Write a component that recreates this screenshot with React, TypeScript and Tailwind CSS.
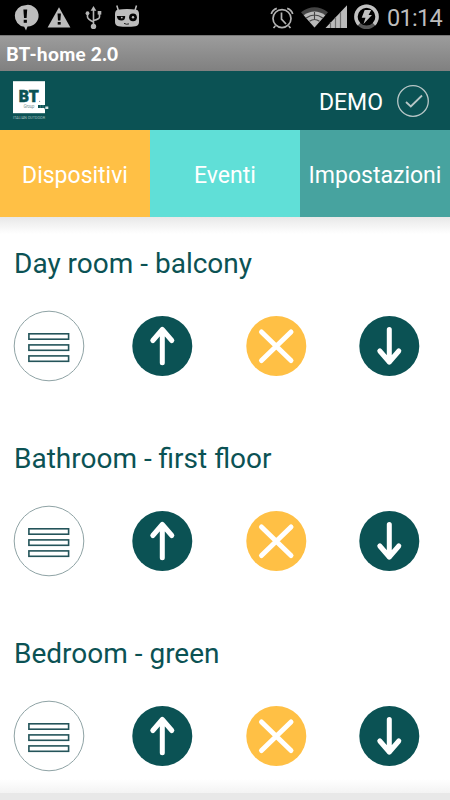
import React from "react";

const rooms = ["Day room - balcony", "Bathroom - first floor", "Bedroom - green"];

const tabs = [
  { label: "Dispositivi", color: "bg-[#ffc045]" },
  { label: "Eventi", color: "bg-[#60dfd7]" },
  { label: "Impostazioni", color: "bg-[#47a39f]" },
];

function StatusBar() {
  return (
    <div className="flex h-[35px] shrink-0 bg-black">
      <svg width="380" height="35" viewBox="0 0 380 35" className="block shrink-0">
        <g fill="#bdbdbd">
          <path d="M25.3 5.2a10.8 10.8 0 1 1 2.2 21.3L26 30.5l-1.8-3.8A10.8 10.8 0 0 1 25.3 5.2z" />
          <path d="M59 7.2 70.4 27.6H47.6z" />
          <path d="M117.500 9.800q9.500-1.400 19 0 2.500.8 2.500 4.200v8q0 3.600-3.500 4.200-8.500 1.300-17 0-3.500-.6-3.500-4.200v-8q0-3.400 2.500-4.200z" />
        </g>
        <g fill="#050505">
          <path d="M23.400 9.500h3.800l-.6 8.500h-2.600z" />
          <rect x="23.700" y="19.800" width="3.200" height="3" />
          <path d="M57.500 13.500h3.400l-.5 7h-2.400z" />
          <rect x="57.700" y="22" width="3" height="2.600" />
          <path d="M116.800 16h8.400q.2 4.600-3.700 4.600-4.200 0-4.700-4.600z" />
          <circle cx="133" cy="17.300" r="3.900" />
        </g>
        <circle cx="121.800" cy="17.600" r=".9" fill="#bdbdbd" />
        <circle cx="133" cy="17.300" r="1.200" fill="#bdbdbd" />
        <path d="M118.500 11l-1.700-5.500M134.800 11l1.700-5.500" fill="none" stroke="#bdbdbd" strokeWidth="1.500" />
        <path d="M124 23.400q2.500 1.400 5 .5" fill="none" stroke="#222" strokeWidth="1" />
        <g stroke="#b5b5b5" fill="none" strokeWidth="1.600">
          <path d="M93.500 9v17M87.500 14v3q0 2 6 5M99.500 13v4q0 2-6 3.500" />
        </g>
        <g fill="#b5b5b5">
          <path d="M93.500 6l2.900 4.800h-5.800z" />
          <circle cx="93.500" cy="26.400" r="2.700" />
          <circle cx="87.500" cy="13.200" r="1.900" />
          <rect x="97.700" y="11" width="3.600" height="3.600" />
        </g>
        <g stroke="#b3b3b3" fill="none" strokeWidth="1.700">
          <circle cx="282" cy="18.600" r="9" />
          <path d="M281.500 12.500v6.700l4.500 4.800M275.300 26l-1.800 2M288.700 26l1.800 2" />
          <path d="M271.300 14q1-4 5.500-5.600M292.700 14q-1-4-5.500-5.600" />
        </g>
        <path d="M301 12.300q13.500-10 27 0l-13.500 15.300z" fill="#444" />
        <path d="M303.700 15.300q10.800-7.500 21.600 0l-10.800 12.300z" fill="#b9b9b9" />
        <path d="M306.200 18q8.300-6 16.600 0M309.500 21.300q5-3.500 10 0M314.500 12v8" fill="none" stroke="#444" strokeWidth="1.100" />
        <path d="M325.500 28 347 5.300V28z" fill="#bbb" />
        <path d="M330.500 22v6M335.500 17v11M340.500 12v16" stroke="#707070" strokeWidth="1.200" />
        <circle cx="366.500" cy="16.700" r="10.600" fill="none" stroke="#555" strokeWidth="3.400" />
        <path d="M359 24.200A10.600 10.600 0 1 1 374 24.200" fill="none" stroke="#c2c2c2" strokeWidth="3.400" />
        <path d="M364.700 10h6.500l-2.600 5h3.400l-8.500 9 2-6.300h-3.800z" fill="#c2c2c2" />
      </svg>
      <span className="ml-[7px] mt-[2px] whitespace-nowrap font-[Roboto,sans-serif] text-[23.500px] leading-[33px] tracking-[-0.7px] text-[#bdbdbd]">01:14</span>
    </div>
  );
}

function BrandLogo() {
  return (
    <svg width="40" height="42" viewBox="12 81 40 42" className="block">
      <rect x="13" y="82.200" width="32" height="32" fill="#fff" />
      <text x="18.800" y="102.800" fontFamily="Roboto, sans-serif" fontWeight="900" fontSize="17.200" textLength="20" lengthAdjust="spacingAndGlyphs" fill="#0b5254" stroke="#0b5254" strokeWidth=".6">BT</text>
      <circle cx="39.600" cy="102.300" r=".6" fill="#789" />
      <text x="23.500" y="109.200" fontFamily="Roboto, sans-serif" fontStyle="italic" fontSize="4.500" textLength="11" fill="#71908f">Group</text>
      <path d="M38 106h7v3h-7zM44.500 107h3.900v3.300h-3.900z" fill="#0b5254" />
      <path d="M45.300 107.500h3v2.500h-3z" fill="#d9e5e5" />
      <path d="M40.300 106v3M43 106v3" stroke="#7da19e" strokeWidth=".5" />
      <text x="13" y="120" fontFamily="Roboto, sans-serif" fontSize="3.300" textLength="32" lengthAdjust="spacingAndGlyphs" fill="#a8c1c1">ITALIAN OUTDOOR</text>
    </svg>
  );
}

function MenuButton() {
  return (
    <button className="size-[72px]" aria-label="Menu">
      <svg width="72" height="72" viewBox="0 0 72 72" className="block">
        <circle cx="36" cy="36" r="34.800" fill="#fff" stroke="#8fa3a5" strokeWidth="1" />
        <g fill="#fff" stroke="#24545a" strokeWidth="1.600">
          <rect x="15.900" y="23.800" width="39.700" height="5.400" />
          <rect x="15.900" y="34.900" width="39.700" height="5.400" />
          <rect x="15.900" y="45.900" width="39.700" height="5.400" />
        </g>
      </svg>
    </button>
  );
}

function ActionButton({ color, path, label }: { color: string; path: string; label: string }) {
  return (
    <button className="size-[61px]" aria-label={label}>
      <svg width="61" height="61" viewBox="0 0 61 61" className="block">
        <circle cx="30.300" cy="30" r="30" fill={color} />
        <path d={path} fill="none" stroke="#fff" strokeWidth="5" strokeLinecap="round" strokeLinejoin="round" />
      </svg>
    </button>
  );
}

function RoomRow({ name }: { name: string }) {
  return (
    <section className="h-[195px] shrink-0">
      <h2 className="h-[93px] whitespace-nowrap pl-[14px] pt-[29px] text-[28px] font-normal leading-9 text-[#0b5254]">{name}</h2>
      <div className="flex items-center pl-[13px]">
        <MenuButton />
        <div className="ml-[47px] flex gap-[52.500px]">
          <ActionButton label="Up" color="#0b5254" path="M30.300 46.800V13.500M20.800 24.500l9.500-11L39.800 24.500" />
          <ActionButton label="Stop" color="#ffc045" path="M15.500 16l29.500 28.500M45 16L15.500 44.500" />
          <ActionButton label="Down" color="#0b5254" path="M30.300 13.500v32.500M20.800 35l9.500 11L39.800 35" />
        </div>
      </div>
    </section>
  );
}

export default function App() {
  return (
    <div className="flex h-[800px] w-[450px] flex-col overflow-hidden bg-white font-[Roboto,sans-serif]">
      <StatusBar />
      <div className="h-9 shrink-0 border-t border-[#777] bg-gradient-to-b from-[#9c9c9c] to-[#808080] pl-[6px] font-[Lato,sans-serif] text-[19px] font-black leading-[36px] tracking-[0.3px] text-white">
        <span className="whitespace-nowrap">BT-home 2.0</span>
      </div>
      <header className="flex h-[59px] shrink-0 items-center justify-between bg-[#0b5254] pl-3 pr-5">
        <BrandLogo />
        <div className="flex items-center gap-[13px] text-white">
          <span className="pt-[3px] text-[23px] leading-none">DEMO</span>
          <svg width="34" height="34" viewBox="0 0 34 34" className="block" fill="none" stroke="#b8c7c7">
            <circle cx="17" cy="17" r="15.300" strokeWidth="1.300" />
            <path d="M10 18l4.800 4.500L26 11.500" strokeWidth="1.800" />
          </svg>
        </div>
      </header>
      <nav className="grid h-[87px] shrink-0 grid-cols-3">
        {tabs.map((tab) => (
          <button key={tab.label} className={`${tab.color} whitespace-nowrap pt-[5px] text-center text-[23px] text-white`}>
            {tab.label}
          </button>
        ))}
      </nav>
      <main className="flex h-[576px] shrink-0 flex-col overflow-hidden bg-[linear-gradient(to_bottom,#e8e8e8_0px,#fff_17px,#fff_562px,#f3f3f3_576px)]">
        {rooms.map((room) => (
          <RoomRow key={room} name={room} />
        ))}
      </main>
      <div className="h-[7px] bg-[#e8e8e8]" />
    </div>
  );
}
